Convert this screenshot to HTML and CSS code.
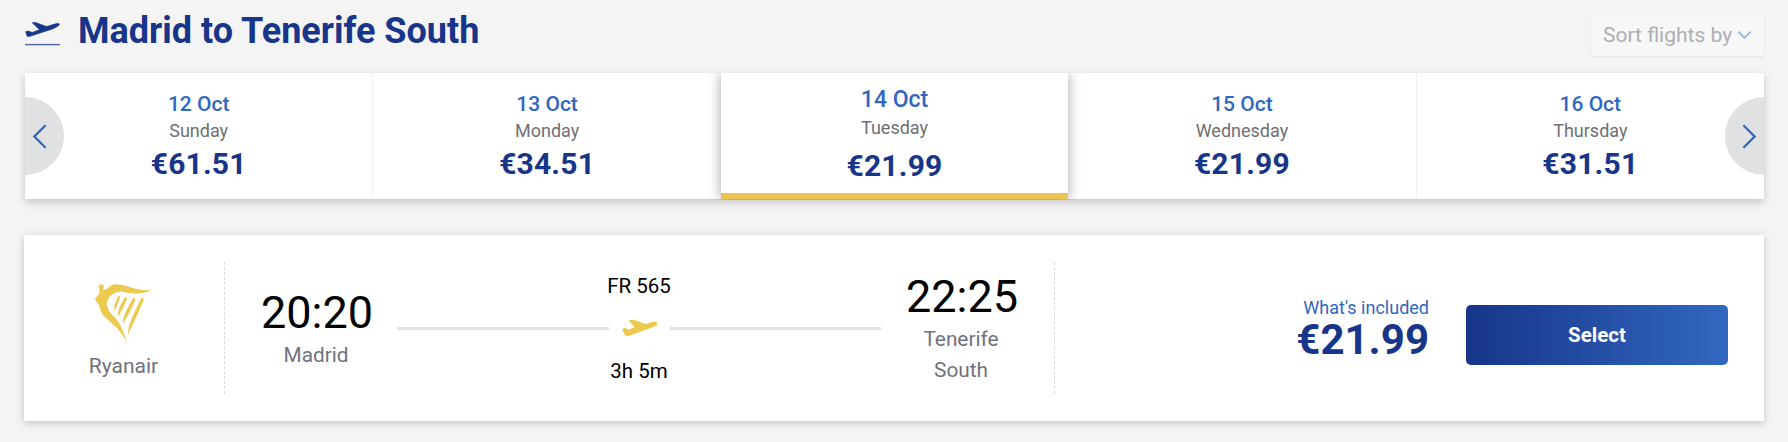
FILE: index.html
```html
<!DOCTYPE html>
<html lang="en">
<head>
<meta charset="utf-8">
<title>Madrid to Tenerife South</title>
<link rel="stylesheet" href="styles.css">
</head>
<body>
<main class="page">
  <header class="head">
    <div class="title-wrap">
      <svg class="title-icon" viewBox="46 45 101 72" aria-hidden="true">
        <path fill="#173589" stroke="#173589" stroke-width="2" stroke-linejoin="round" d="M48 76L55 74L67 78L88 70L67 50L76 49L108 61L135 53Q147 51 145 56Q140 62 125 68L60 89Q55 91 52 88Z"/>
        <rect x="46" y="111" width="101" height="4" fill="#4a67ad"/>
      </svg>
      <h1 class="title">Madrid to Tenerife South</h1>
    </div>
    <button class="sort" type="button">
      <span>Sort flights by</span>
      <svg class="sort-chevron" viewBox="0 0 16 10" aria-hidden="true"><path d="M1.5 1.5L8 8L14.5 1.5" fill="none" stroke="#8fb1e2" stroke-width="1.8"/></svg>
    </button>
  </header>

  <section class="dates">
    <div class="day"><div class="day-date">12 Oct</div><div class="day-name">Sunday</div><div class="day-price">€61.51</div></div>
    <div class="day"><div class="day-date">13 Oct</div><div class="day-name">Monday</div><div class="day-price">€34.51</div></div>
    <div class="day day-active"><div class="day-date">14 Oct</div><div class="day-name">Tuesday</div><div class="day-price">€21.99</div></div>
    <div class="day"><div class="day-date">15 Oct</div><div class="day-name">Wednesday</div><div class="day-price">€21.99</div></div>
    <div class="day"><div class="day-date">16 Oct</div><div class="day-name">Thursday</div><div class="day-price">€31.51</div></div>
    <button class="nav nav-prev" type="button" aria-label="Previous">
      <svg viewBox="0 0 15 26" aria-hidden="true"><path d="M13.5 1L1.5 13L13.5 25" fill="none" stroke="#2f67c0" stroke-width="2.4"/></svg>
    </button>
    <button class="nav nav-next" type="button" aria-label="Next">
      <svg viewBox="0 0 15 26" aria-hidden="true"><path d="M1.5 1L13.5 13L1.5 25" fill="none" stroke="#2f67c0" stroke-width="2.4"/></svg>
    </button>
  </section>

  <section class="flight">
    <div class="airline">
      <svg class="harp" viewBox="48 42 168 172" aria-hidden="true">
        <path fill="#ecc94f" d="M58 46Q66 41 73 46Q75 54 71 60Q78 60 85 55Q95 43 110 43Q135 45 160 54Q190 64 215 58Q200 68 175 70Q150 71 125 64Q105 66 92 78Q82 90 82 102Q86 125 106 140Q128 165 141 213Q128 190 112 172Q88 150 70 133Q60 116 60 104Q48 92 48 84Q56 76 60 70Q62 62 58 46Z"/>
        <path fill="#ecc94f" d="M117 77Q123 78 121 85Q115 105 104 122Q102 105 117 77Z"/>
        <path fill="#ecc94f" d="M137 80Q144 82 141 90Q130 118 116 138Q113 118 137 80Z"/>
        <path fill="#ecc94f" d="M162 82Q169 84 166 92Q150 130 131 160Q127 138 162 82Z"/>
        <path fill="#ecc94f" d="M186 82Q193 84 191 92Q170 142 146 190Q142 165 186 82Z"/>
      </svg>
      <div class="airline-name">Ryanair</div>
    </div>
    <div class="route">
      <div class="stop stop-dep">
        <div class="stop-time">20:20</div>
        <div class="stop-city">Madrid</div>
      </div>
      <div class="leg">
        <div class="leg-text">FR 565</div>
        <div class="leg-line">
          <span class="line"></span>
          <svg class="leg-plane" viewBox="64 43 108 52" aria-hidden="true"><path fill="#ecc94f" stroke="#ecc94f" stroke-width="4" stroke-linejoin="round" d="M67 74L72 71L85 76L105 67L87 47L98 46L135 59L160 52Q170 52 168 57Q165 62 150 67L85 90Q76 93 73 87Z"/></svg>
          <span class="line"></span>
        </div>
        <div class="leg-text">3h 5m</div>
      </div>
      <div class="stop stop-arr">
        <div class="stop-time">22:25</div>
        <div class="stop-city">Tenerife South</div>
      </div>
    </div>
    <div class="buy">
      <div class="fare">
        <a class="fare-link">What's included</a>
        <div class="fare-price">€21.99</div>
      </div>
      <button class="select" type="button">Select</button>
    </div>
  </section>
</main>
</body>
</html>
```
FILE: styles.css
```css
* { box-sizing: border-box; }
html, body { margin: 0; padding: 0; }
body {
  background: #f4f4f4;
  font-family: Roboto, "Liberation Sans", sans-serif;
  color: #000;
}
.page { width: 1788px; height: 442px; padding: 0 24px; overflow: hidden; }

.head { height: 73px; padding-top: 14px; display: flex; justify-content: space-between; align-items: flex-start; }
.title-wrap { display: flex; align-items: flex-start; }
.title-icon { width: 35px; height: 25px; margin: 7px 0 0 1px; flex: none; }
.title { margin: -6px 0 0 18px; font-size: 36px; line-height: 46px; font-weight: 700; color: #173589; }
.sort {
  width: 173px; height: 42px; padding: 0 0 0 12px;
  display: flex; align-items: center; gap: 5px;
  border: 0; border-radius: 3px;
  background: #f7f7f7; box-shadow: 0 1px 3px rgba(0,0,0,.08);
  font: 400 21px Roboto, sans-serif; color: #adafb4;
}
.sort-chevron { width: 15px; height: 10px; flex: none; }

.dates {
  position: relative; height: 126px; margin-left: 1px; display: flex;
  background: #fff; box-shadow: 0 3px 8px rgba(0,0,0,.2);
}
.day {
  flex: 1 1 0; padding-top: 18px; text-align: center;
  border-left: 1px solid #eff0f1;
}
.day:first-child { border-left: 0; }
.day-date { font-size: 21px; line-height: 26px; font-weight: 500; color: #2f67c0; }
.day-name { font-size: 18px; line-height: 27px; color: #6f7075; }
.day-price { font-size: 30px; line-height: 38px; font-weight: 700; color: #173589; margin-top: 1px; letter-spacing: .2px; }
.day-active {
  position: relative; z-index: 1; padding-top: 14px; border-left: 0;
  border-bottom: 6px solid #ecc550;
  background: #fff; box-shadow: 0 0 12px rgba(0,0,0,.35);
  clip-path: inset(0 -20px -1px -20px);
}
.day-active + .day { border-left: 0; }
.day-active .day-date { font-size: 23px; }
.day-active .day-name { margin-top: 2px; line-height: 26px; }
.day-active .day-price { margin-top: 6px; }

.nav {
  position: absolute; z-index: 2; top: 24px; width: 39px; height: 78px;
  padding: 0; border: 0; background: #dfe1e3;
  display: flex; align-items: center;
}
.nav svg { width: 14px; height: 25px; }
.nav-prev { left: 0; border-radius: 0 39px 39px 0; justify-content: flex-start; padding-left: 8px; }
.nav-next { right: 0; border-radius: 39px 0 0 39px; justify-content: flex-end; padding-right: 8px; }

.flight {
  margin-top: 36px; height: 186px; display: flex; align-items: stretch;
  padding: 27px 36px 27px 0;
  background: #fff; box-shadow: 0 2px 8px rgba(0,0,0,.2);
}
.airline {
  width: 201px; flex: none; padding-top: 22px; text-align: center;
  border-right: 1px dashed #d9d9d9;
}
.harp { display: block; width: 57px; height: 58px; margin: 0 auto 0 71px; }
.airline-name { font-size: 21px; line-height: 30px; margin: 9px 0 0; padding-right: 1px; color: #6f727c; }

.route { width: 830px; flex: none; display: flex; align-items: center; border-right: 1px dashed #d9d9d9; height: 132px; }
.stop { width: 110px; flex: none; text-align: center; }
.stop-dep { margin-left: 36px; margin-right: 26px; }
.stop-arr { margin-left: 25px; margin-right: 38px; }
.stop-time { font-size: 45px; line-height: 54px; }
.stop-city { font-size: 20.8px; line-height: 31px; color: #6f727c; }
.leg { flex: 1 1 0; display: flex; flex-direction: column; align-items: stretch; text-align: center; gap: 17px; }
.leg-text { font-size: 20.5px; line-height: 30px; }
.leg-line { display: flex; align-items: center; height: 21px; }
.line { flex: 1 1 0; height: 3px; background: #e3e3e3; }
.leg-plane { width: 36px; height: 18px; margin: 0 12px 0 13px; flex: none; }

.buy { flex: 1 1 0; display: flex; align-items: center; justify-content: flex-end; gap: 37px; height: 132px; }
.fare { text-align: right; margin-top: 3px; }
.fare-link { display: block; font-size: 18px; line-height: 20px; color: #2f67c0; }
.fare-price { font-size: 42px; line-height: 44px; font-weight: 700; color: #173589; }
.select {
  width: 262px; height: 60px; margin-top: 14px; border: 0; border-radius: 5px;
  background: linear-gradient(90deg, #173589, #3168c0);
  color: #fff; font: 700 20.5px Roboto, sans-serif;
}
```
